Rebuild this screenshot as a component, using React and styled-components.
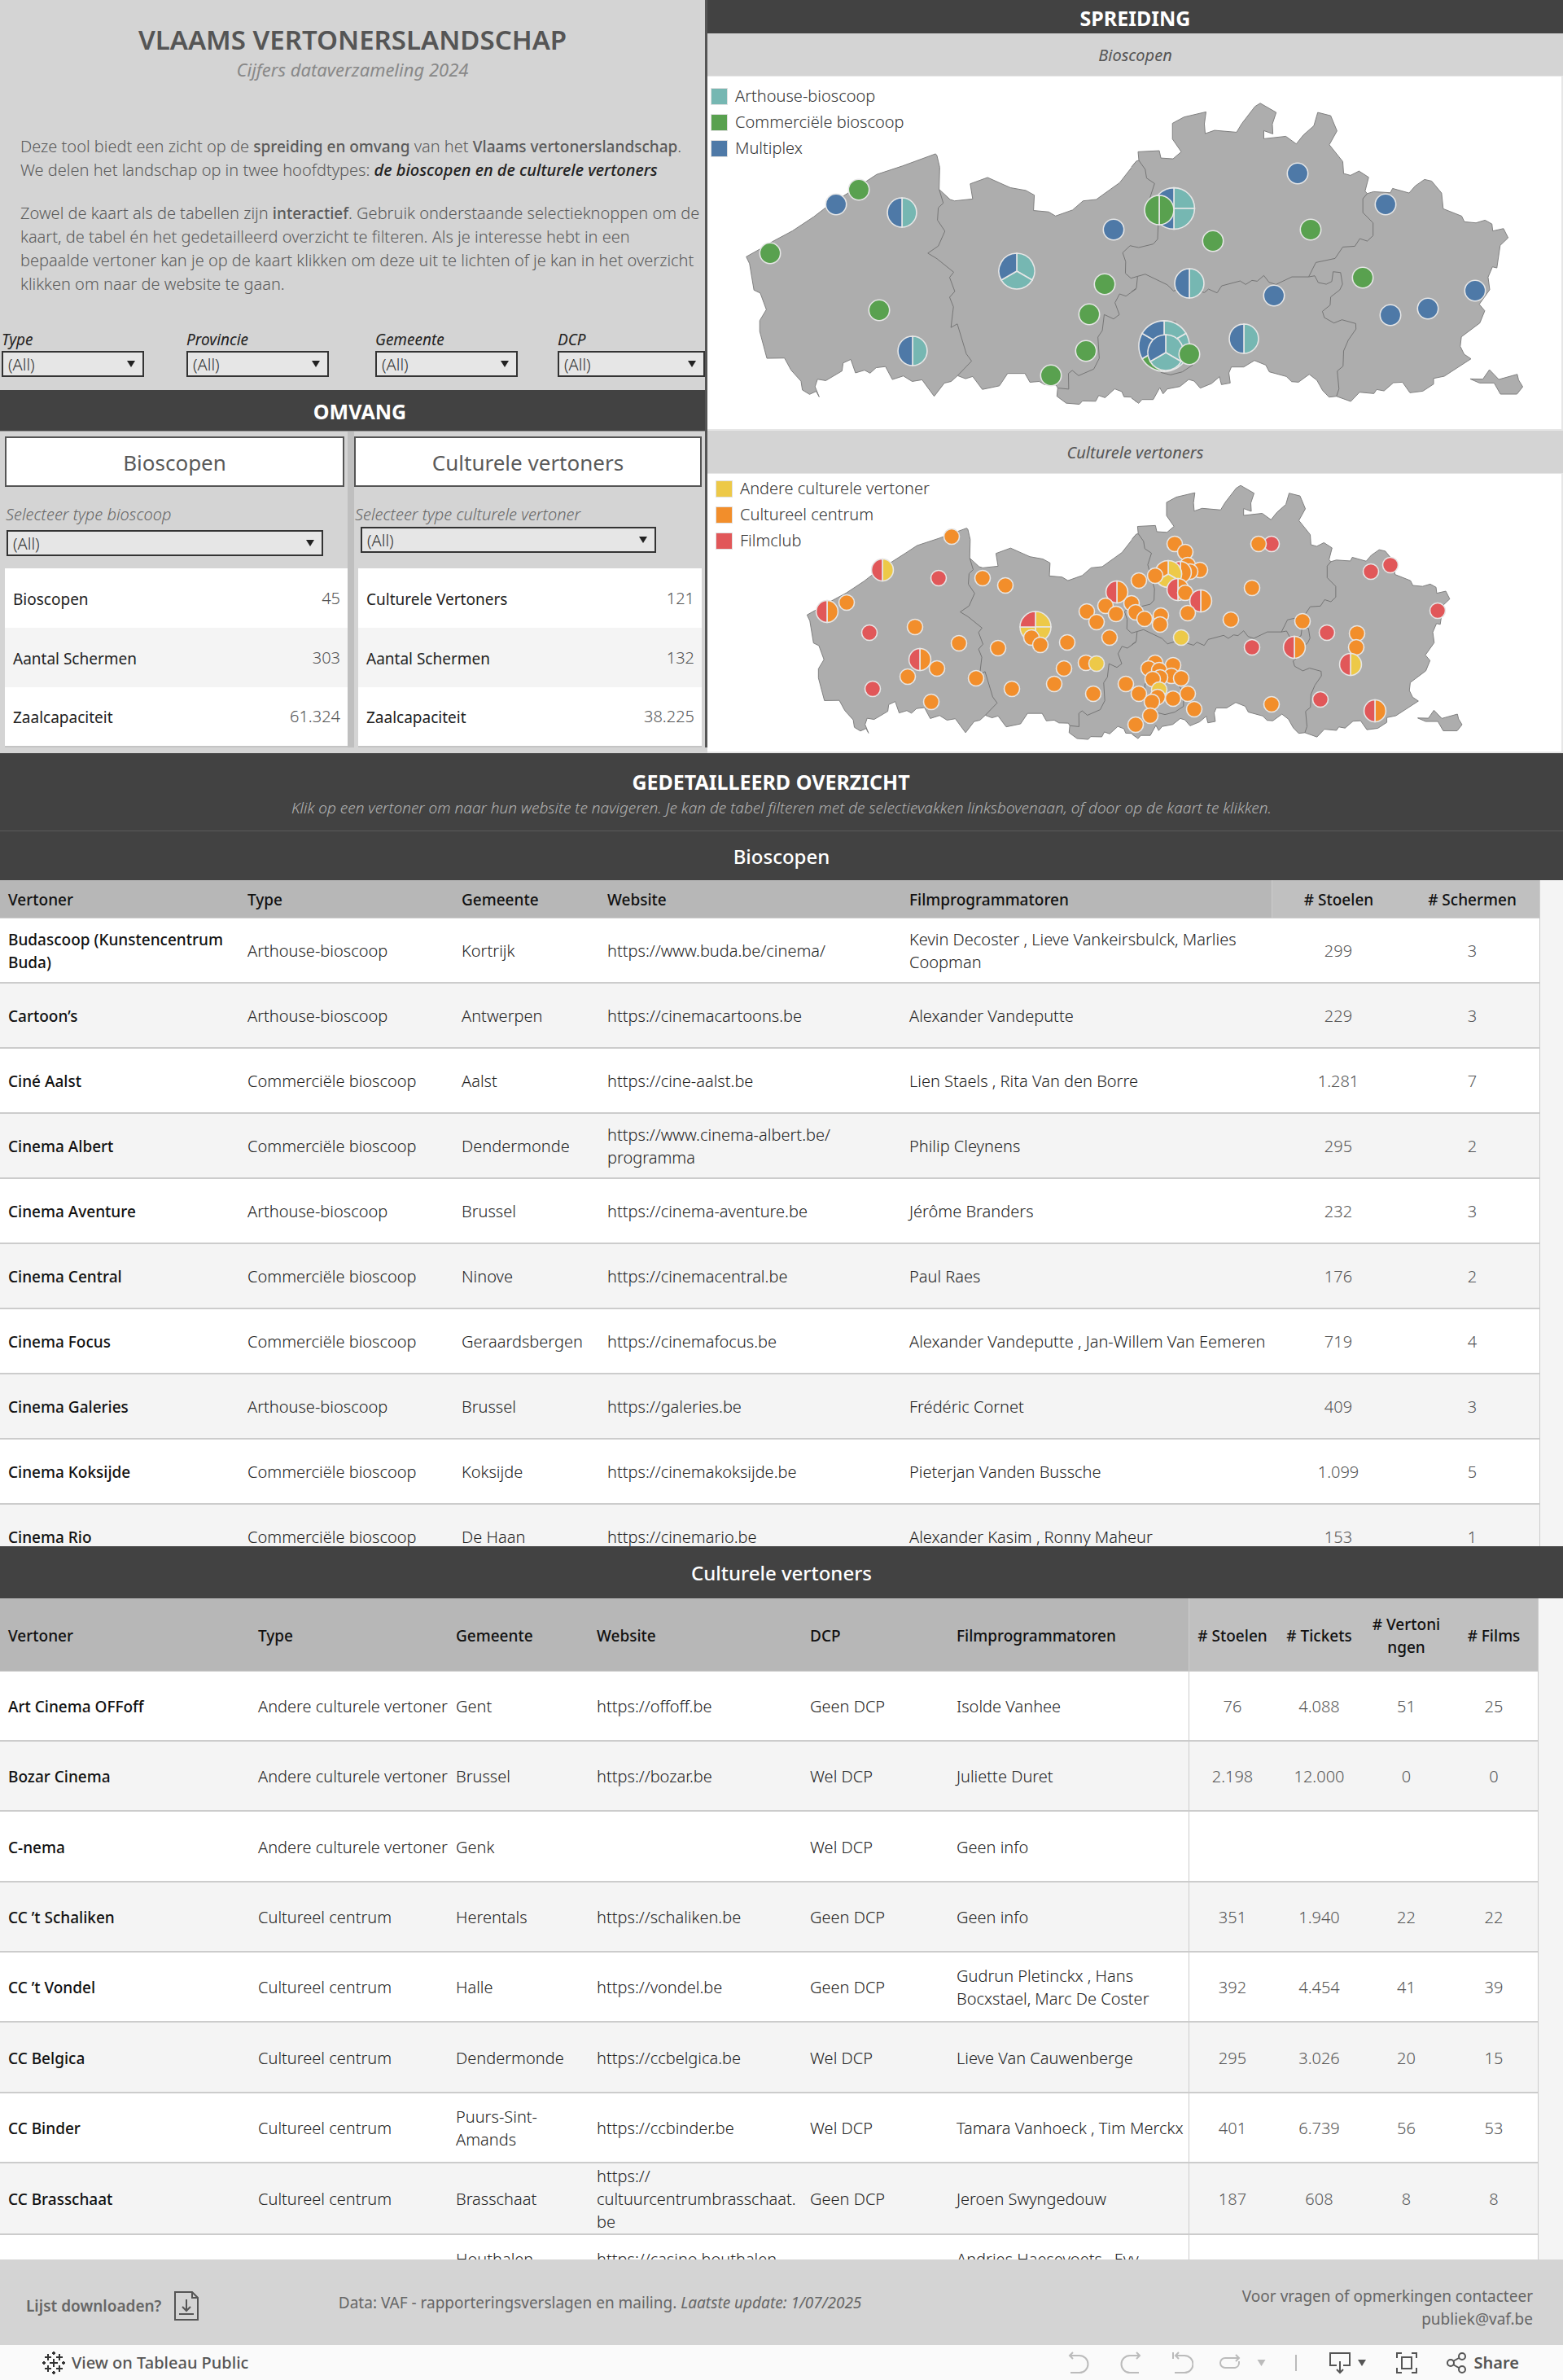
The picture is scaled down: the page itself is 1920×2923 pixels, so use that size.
import React from 'react';
import styled, { createGlobalStyle, css } from 'styled-components';

const GlobalStyle = createGlobalStyle`
  *, *::before, *::after {
    box-sizing: border-box;
  }

  body {
    margin: 0;
    background: #f4f4f4;
    color: #333;
    font-family: 'Noto Sans', 'Open Sans', sans-serif;
    font-size: 20px;
    font-weight: 300;
    line-height: 28px;
  }

  h1, h2, h3, p {
    margin: 0;
  }
`;

const COLORS = {
  teal: '#76b7b2',
  green: '#59a14f',
  blue: '#4e79a7',
  yellow: '#edc948',
  orange: '#f28e2b',
  red: '#e15759',
};

/* ---------- layout ---------- */

const TopArea = styled.div`
  display: grid;
  grid-template-columns: 869fr 1051fr;
  height: 925px;
  background: #d4d4d4;
`;

const LeftPanel = styled.section`
  display: flex;
  flex-direction: column;
  border-right: 3px solid #555;
  margin-bottom: 18px;
  min-width: 0;
`;

const RightPanel = styled.section`
  display: flex;
  flex-direction: column;
  min-width: 0;
`;

const DarkBar = styled.h2`
  display: flex;
  align-items: center;
  justify-content: center;
  flex: none;
  height: ${({ $height }) => $height}px;
  padding: 2px 0 0 ${({ $indent }) => $indent || 0}px;
  background: #424242;
  color: #fff;
  font-size: ${({ $small }) => ($small ? 24 : 25)}px;
  font-weight: ${({ $small }) => ($small ? 500 : 700)};
`;

const SubBar = styled.h3`
  display: flex;
  align-items: center;
  justify-content: center;
  flex: none;
  height: 53px;
  padding-top: 2px;
  border-bottom: 1px solid #e6e6e6;
  background: #d4d4d4;
  color: #555;
  font-size: 20px;
  font-style: italic;
  font-weight: 400;
`;

/* ---------- intro ---------- */

const Intro = styled.header`
  height: 479px;
  padding-top: 29px;
`;

const Title = styled.h1`
  color: #555;
  font-size: 33px;
  font-weight: 600;
  line-height: 40px;
  text-align: center;
`;

const Subtitle = styled.p`
  margin-top: 2px;
  color: #888;
  font-size: 22px;
  font-style: italic;
  font-weight: 400;
  text-align: center;
`;

const IntroText = styled.div`
  margin-top: 66px;
  padding-left: 25px;
  color: #5a5a5a;
  line-height: 29px;
  white-space: nowrap;

  p + p {
    margin-top: 24px;
  }

  b {
    font-size: 19px;
    font-weight: 500;
    line-height: 1;
  }

  em {
    color: #222;
    font-weight: 500;
  }
`;

const Filters = styled.div`
  display: grid;
  grid-template-columns: 227fr 232fr 224fr 181fr;
  margin-top: 40px;
  padding-left: 2px;
`;

const Field = styled.div`
  display: flex;
  flex-direction: column;
  align-items: flex-start;
`;

const FieldLabel = styled.label`
  color: #222;
  font-size: 19px;
  font-style: italic;
  font-weight: 400;
`;

const SelectBox = styled.div`
  position: relative;
  width: ${({ $width }) => $width || '100%'};
`;

const Select = styled.select`
  display: block;
  width: 100%;
  height: 32px;
  padding: 0 6px;
  appearance: none;
  border: 2px solid #333;
  border-radius: 0;
  background: #e6e6e6;
  color: #333;
  font-family: inherit;
  font-size: 20px;
  font-weight: 300;
`;

const SelectCaret = styled.svg`
  position: absolute;
  top: 12px;
  right: 11px;
  width: 10px;
  height: 8px;
  fill: #222;
  pointer-events: none;
`;

const Dropdown = ({ id, width }) => (
  <SelectBox $width={width}>
    <Select id={id} defaultValue="all">
      <option value="all">(All)</option>
    </Select>
    <SelectCaret viewBox="0 0 10 8" aria-hidden="true">
      <path d="M0 0h10L5 8z" />
    </SelectCaret>
  </SelectBox>
);

/* ---------- omvang ---------- */

const Omvang = styled.div`
  display: grid;
  grid-template-columns: 427fr 439fr;
  flex: 1;
  border-top: 1px solid #999;
`;

const OmvangColumn = styled.div`
  display: flex;
  flex-direction: column;
  align-items: flex-start;
  min-width: 0;
  padding-top: 6px;

  ${({ $divided }) =>
    $divided &&
    css`
      border-left: 8px solid #bfbfbf;
    `}
`;

const BoxTitle = styled.h3`
  display: flex;
  align-items: center;
  justify-content: center;
  align-self: stretch;
  height: 62px;
  margin: 0 4px 20px ${({ $left }) => $left}px;
  padding-top: 2px;
  border: 2px solid #555;
  background: #fff;
  color: #5a5a5a;
  font-size: 26px;
  font-weight: 400;
`;

const SelectArea = styled.div`
  height: 80px;
  align-self: stretch;
  padding-left: ${({ $left }) => $left}px;
`;

const SelectHint = styled.label`
  display: block;
  color: #666;
  font-style: italic;
`;

const SelectSlot = styled.div`
  padding: ${({ $pad }) => $pad};
`;

const KpiTable = styled.table`
  align-self: stretch;
  width: auto;
  margin-left: ${({ $left }) => $left}px;
  margin-right: ${({ $right }) => $right}px;
  border-collapse: collapse;
  border-bottom: 2px solid #c4c4c4;
`;

const KpiRow = styled.tr`
  height: 73px;
  background: #fff;

  &:nth-child(2) {
    background: #f4f4f4;
  }
`;

const KpiLabel = styled.th`
  padding: 2px 0 0 10px;
  color: #222;
  font-size: 19px;
  font-weight: 400;
  text-align: left;
`;

const KpiValue = styled.td`
  padding: 0 9px 0 0;
  color: #555;
  text-align: right;
`;

const KpiWrap = styled.div`
  display: grid;
  align-self: stretch;
`;

const Kpis = ({ rows, left, right }) => (
  <KpiWrap>
    <KpiTable $left={left} $right={right}>
      <tbody>
        {rows.map(([label, value]) => (
          <KpiRow key={label}>
            <KpiLabel scope="row">{label}</KpiLabel>
            <KpiValue>{value}</KpiValue>
          </KpiRow>
        ))}
      </tbody>
    </KpiTable>
  </KpiWrap>
);

/* ---------- maps ---------- */

const MapPanel = styled.div`
  position: relative;
  height: ${({ $height }) => $height}px;
  border-right: 2px solid #e6e6e6;
  border-bottom: 2px solid #e6e6e6;
  background: #fff;
`;

const MapSvg = styled.svg`
  display: block;
  width: 100%;
  height: 100%;

  .land {
    fill: #adadad;
    stroke: #808080;
  }

  .border {
    fill: none;
    stroke: #757575;
  }

  .land,
  .border {
    stroke-width: 1px;
    stroke-linejoin: round;
    vector-effect: non-scaling-stroke;
  }

  .pin {
    stroke: #e6e6e6;
    stroke-width: 1.6px;
  }
`;

const Legend = styled.ul`
  position: absolute;
  top: ${({ $top }) => $top}px;
  left: ${({ $left }) => $left}px;
  margin: 0;
  padding: 0;
  list-style: none;
`;

const LegendItem = styled.li`
  display: flex;
  align-items: center;
  gap: 9px;
  height: 32px;

  &::before {
    content: '';
    width: 21px;
    height: 21px;
    border: 1px solid #e0e0e0;
    background: ${({ $color }) => $color};
  }
`;

const WEST =
  'M1568,1457 1548,1440 1523,1439 1515,1420 1489,1410 1454,1442 1431,1434 1420,1455 1372,1454 1361,1466 1313,1462 1279,1437 1282,1407 1276,1396 1235,1395 1215,1383 1181,1386 1163,1354 1100,1354 1070,1399 1008,1412 973,1365 947,1373 918,1362 895,1383 870,1389 833,1437 789,1377 753,1383 721,1363 681,1376 656,1329 622,1333 600,1353 580,1342 547,1352 530,1303 502,1316 498,1345 439,1380 409,1375 400,1402 415,1439 404,1419 380,1430 354,1414 349,1382 313,1342 289,1298 225,1299 199,1201 199,1162 223,1122 201,1062 178,1051 162,955 150,930 200,902 245,875 318,836 395,785 438,752 505,708 580,660 624,631 718,600 838,556 843,562 853,605 851,685 891,722 907,727 973,720 964,665 1027,642 1110,679 1166,689 1197,706 1194,762 1249,767 1274,782 1336,760 1374,727 1422,722 1472,686 1507,661 1568,583';

const WEST_BORDERS = [
  'M851,685 866,735 848,752 845,797 872,837 848,891 810,917 843,937 904,986 889,1005 908,1056 889,1077 903,1112 894,1187 917,1174 950,1283 969,1309 918,1362',
  'M1282,1407 1322,1411 1321,1354 1335,1343 1358,1362 1413,1338 1433,1299 1428,1222 1444,1198 1451,1140 1485,1156 1506,1140 1490,1097 1507,1065 1530,1073 1568,1046',
];

const EAST =
  'M0,372 18,350 27,348 24,316 101,312 107,339 151,342 181,316 149,269 149,211 191,188 271,169 265,213 268,249 302,237 382,244 401,212 449,149 468,137 526,171 512,214 514,250 481,238 481,268 561,259 599,287 625,254 663,220 677,171 724,183 747,239 719,290 768,352 771,396 796,403 827,387 862,410 849,461 857,470 880,463 941,467 949,451 1009,468 1031,442 1065,418 1091,424 1127,468 1133,526 1200,553 1210,574 1252,578 1285,568 1310,582 1313,608 1352,599 1369,633 1340,661 1328,744 1312,740 1296,778 1302,824 1264,878 1284,902 1266,947 1199,998 1195,1033 1209,1062 1234,1079 1137,1143 1098,1151 1098,1172 1059,1198 1012,1204 985,1165 952,1167 918,1197 891,1192 881,1207 829,1202 797,1236 745,1217 718,1220 695,1196 674,1158 646,1136 607,1165 582,1163 563,1144 501,1127 488,1102 447,1085 408,1109 363,1109 354,1131 359,1168 327,1174 320,1145 291,1170 250,1187 228,1161 208,1155 176,1181 130,1190 115,1208 103,1185 79,1229 38,1229 26,1243 0,1223';

const VOEREN =
  'M1231,1153 1277,1154 1301,1119 1335,1155 1402,1136 1407,1157 1422,1182 1401,1209 1341,1209 1318,1168 1265,1168Z';

const EAST_BORDERS = [
  'M27,348 50,381 55,413 84,433 68,483 80,530 97,588 95,638 79,656 26,669 -5,662 -32,688 -21,721 -22,764 -2,782 50,767 130,806 153,829 200,815 265,835 280,822 311,836 328,810 395,792 415,805 438,790 457,793 481,772 500,797 525,805 583,777 644,777',
  'M0,832 18,818 22,777',
  'M857,470 841,489 841,540 878,578 878,625 857,645 830,636 812,664 768,667 740,709 670,724 644,777',
  'M644,777 666,773 679,798 708,804 728,794 733,758 760,761 767,804 757,825 724,851 722,881 694,904 701,927 736,947 765,935 815,949 816,969 788,1010 771,1050 769,1106 748,1124 754,1190 745,1217',
  'M80,950 158,942 209,1022 222,1050 222,1102 185,1127 142,1138 110,1130 65,1100 55,1010Z',
];

const Flanders = ({ transform }) => (
  <g transform={transform}>
    <path className="land" d={WEST} />
    <g transform="translate(1550 237) scale(1 0.986)">
      <path className="land" d={EAST} />
      <path className="land" d={VOEREN} />
      {EAST_BORDERS.map((d) => (
        <path key={d} className="border" d={d} />
      ))}
    </g>
    {WEST_BORDERS.map((d) => (
      <path key={d} className="border" d={d} />
    ))}
  </g>
);

const CODES = {
  T: COLORS.teal,
  G: COLORS.green,
  B: COLORS.blue,
  Y: COLORS.yellow,
  O: COLORS.orange,
  R: COLORS.red,
};

const slicePath = (x, y, r, index, count) => {
  const point = (i) => {
    const angle = (i / count) * Math.PI * 2 - Math.PI / 2;
    return `${x + r * Math.cos(angle)},${y + r * Math.sin(angle)}`;
  };
  return `M${x},${y} L${point(index)} A${r},${r} 0 0 1 ${point(index + 1)}Z`;
};

// one letter per slice, clockwise from the top
const Pin = ({ x, y, kinds, base }) => {
  if (kinds.length === 1) {
    return <circle className="pin" cx={x} cy={y} r={base} fill={CODES[kinds]} />;
  }
  const r = base * Math.sqrt(kinds.length);
  return kinds
    .split('')
    .map((kind, i) => (
      <path
        key={i}
        className="pin"
        d={slicePath(x, y, r, i, kinds.length)}
        fill={CODES[kind]}
      />
    ));
};

const CINEMA_PINS = [
  [158, 157, 'B'], [186, 139, 'G'], [239, 167, 'TB'], [77, 217, 'G'],
  [380, 239, 'TTB'], [211, 287, 'G'], [252, 337, 'TB'], [499, 188, 'B'],
  [488, 255, 'G'], [469, 292, 'G'], [465, 337, 'G'], [422, 367, 'G'],
  [573, 162, 'TTBB'], [555, 164, 'GG'], [725, 119, 'B'], [833, 157, 'B'],
  [621, 202, 'G'], [741, 188, 'G'], [592, 254, 'TB'], [805, 247, 'G'],
  [696, 269, 'B'], [943, 263, 'B'], [885, 285, 'B'], [839, 293, 'B'],
  [659, 322, 'TB'], [561, 331, 'TTTGBB'], [563, 339, 'TTB'], [592, 341, 'G'],
];

const CULTURE_PINS = [
  [300, 77, 'O'], [215, 118, 'YR'], [284, 128, 'R'], [338, 128, 'O'],
  [366, 137, 'O'], [171, 158, 'O'], [147, 169, 'OR'], [199, 195, 'R'],
  [255, 188, 'O'], [309, 208, 'O'], [357, 214, 'O'], [403, 188, 'YYYR'],
  [398, 201, 'O'], [409, 210, 'O'], [442, 207, 'O'], [503, 145, 'OR'],
  [466, 169, 'O'], [489, 162, 'O'], [502, 172, 'O'], [478, 182, 'O'],
  [494, 201, 'O'], [465, 232, 'O'], [478, 233, 'Y'], [438, 239, 'O'],
  [426, 258, 'O'], [474, 270, 'O'], [374, 264, 'O'], [261, 228, 'OR'],
  [282, 239, 'O'], [246, 249, 'O'], [330, 251, 'O'], [275, 280, 'O'],
  [203, 264, 'R'], [514, 258, 'O'], [530, 270, 'O'], [526, 308, 'O'],
  [530, 131, 'O'], [521, 159, 'O'], [526, 170, 'O'], [574, 86, 'O'],
  [587, 96, 'O'], [590, 112, 'O'], [605, 118, 'O'], [593, 120, 'O'],
  [581, 121, 'OR'], [566, 123, 'YYO'], [550, 125, 'O'], [578, 142, 'OR'],
  [587, 146, 'O'], [606, 156, 'OR'], [590, 171, 'O'], [557, 174, 'O'],
  [556, 185, 'O'], [537, 178, 'O'], [582, 201, 'Y'], [643, 179, 'O'],
  [669, 140, 'O'], [693, 86, 'R'], [677, 86, 'O'], [815, 120, 'R'],
  [839, 112, 'R'], [897, 168, 'R'], [731, 181, 'O'], [761, 195, 'R'],
  [798, 196, 'O'], [797, 213, 'O'], [790, 234, 'YR'], [721, 213, 'OR'],
  [669, 213, 'R'], [753, 277, 'R'], [693, 283, 'O'], [820, 291, 'OR'],
  [550, 232, 'O'], [542, 239, 'O'], [572, 235, 'O'], [555, 241, 'O'],
  [570, 248, 'O'], [556, 250, 'O'], [547, 252, 'O'], [582, 251, 'O'],
  [555, 265, 'Y'], [553, 274, 'O'], [572, 276, 'O'], [546, 280, 'O'],
  [590, 270, 'O'], [598, 289, 'O'], [544, 297, 'O'],
];

const PinMap = ({ label, height, transform, pins, base }) => (
  <MapSvg viewBox={`0 0 1049 ${height}`} role="img" aria-label={label}>
    <Flanders transform={transform} />
    {pins.map(([x, y, kinds]) => (
      <Pin key={`${x}-${y}`} x={x} y={y} kinds={kinds} base={base} />
    ))}
  </MapSvg>
);

/* ---------- tables ---------- */

const DetailHeader = styled.div`
  height: 96px;
  padding: 21px 24px 0;
  border-bottom: 1px solid #5a5a5a;
  background: #424242;
  text-align: center;
`;

const DetailTitle = styled.h2`
  padding-right: 26px;
  color: #fff;
  font-size: 25px;
  font-weight: 700;
`;

const DetailText = styled.p`
  margin-top: 4px;
  color: #b4b4b4;
  font-size: 19px;
  font-style: italic;
`;

const TableWindow = styled.div`
  height: ${({ $height }) => $height}px;
  padding-right: ${({ $gutter }) => $gutter}px;
  overflow: hidden;
`;

const DataTable = styled.table`
  width: 100%;
  border-collapse: separate;
  border-right: 1px solid #ccc;
  border-spacing: 0;
  table-layout: fixed;
`;

const HeadCell = styled.th`
  height: ${({ $height }) => $height}px;
  padding: 2px 0 0 ${({ $number }) => ($number ? 0 : 10)}px;
  border-bottom: 1px solid #ccc;
  border-left: ${({ $first }) => ($first ? '1px solid #ccc' : '0')};
  background: ${({ $number }) => ($number ? '#c0c0c0' : '#b7b7b7')};
  color: #111;
  font-size: 19px;
  font-weight: 500;
  text-align: ${({ $number }) => ($number ? 'center' : 'left')};
  white-space: pre-line;
`;

const Row = styled.tr`
  height: ${({ $height }) => $height}px;
  background: #fff;

  &:nth-child(even) {
    background: #f4f4f4;
  }

  &:nth-child(3n) {
    height: ${({ $height, $extra }) => $height + ($extra || 0)}px;
  }
`;

const Cell = styled.td`
  padding: 2px 0 0 ${({ $number }) => ($number ? 0 : 10)}px;
  border-bottom: 2px solid #ccc;
  border-left: ${({ $line }) => ($line ? '1px solid #ccc' : '0')};
  color: ${({ $number }) => ($number ? '#555' : '#222')};
  text-align: ${({ $number }) => ($number ? 'center' : 'left')};
  white-space: pre-line;
`;

const NameCell = styled(Cell).attrs({ as: 'th' })`
  color: #111;
  font-size: 19px;
  font-weight: 500;
`;

const SiteLink = styled.a`
  color: inherit;
  text-decoration: none;
`;

const VenueTable = ({ columns, rows, headHeight, rowHeight, extra, divided }) => {
  const firstNumber = columns.findIndex((column) => column.number);

  return (
    <DataTable>
      <colgroup>
        {columns.map(({ title, width }) => (
          <col key={title} width={width} />
        ))}
      </colgroup>
      <thead>
        <tr>
          {columns.map(({ title, number }, i) => (
            <HeadCell
              key={title}
              scope="col"
              $height={headHeight}
              $number={number}
              $first={i === firstNumber}
            >
              {title}
            </HeadCell>
          ))}
        </tr>
      </thead>
      <tbody>
        {rows.map((row, rowIndex) => (
          <Row key={rowIndex} $height={rowHeight} $extra={extra}>
            {row.map((value, i) => {
              if (i === 0) {
                return (
                  <NameCell key={i} scope="row">
                    {value}
                  </NameCell>
                );
              }
              return (
                <Cell
                  key={i}
                  $number={columns[i].number}
                  $line={divided && i === firstNumber}
                >
                  {columns[i].title === 'Website' && value ? (
                    <SiteLink href={value.replace(/\n/g, '')}>{value}</SiteLink>
                  ) : (
                    value
                  )}
                </Cell>
              );
            })}
          </Row>
        ))}
      </tbody>
    </DataTable>
  );
};

const CINEMA_COLUMNS = [
  { title: 'Vertoner', width: 294 },
  { title: 'Type', width: 263 },
  { title: 'Gemeente', width: 179 },
  { title: 'Website', width: 371 },
  { title: 'Filmprogrammatoren', width: 455 },
  { title: '# Stoelen', width: 164, number: true },
  { title: '# Schermen', width: 165, number: true },
];

const CINEMAS = [
  ['Budascoop (Kunstencentrum\nBuda)', 'Arthouse-bioscoop', 'Kortrijk', 'https://www.buda.be/cinema/', 'Kevin Decoster , Lieve Vankeirsbulck, Marlies\nCoopman', '299', '3'],
  ['Cartoon’s', 'Arthouse-bioscoop', 'Antwerpen', 'https://cinemacartoons.be', 'Alexander Vandeputte', '229', '3'],
  ['Ciné Aalst', 'Commerciële bioscoop', 'Aalst', 'https://cine-aalst.be', 'Lien Staels , Rita Van den Borre', '1.281', '7'],
  ['Cinema Albert', 'Commerciële bioscoop', 'Dendermonde', 'https://www.cinema-albert.be/\nprogramma', 'Philip Cleynens', '295', '2'],
  ['Cinema Aventure', 'Arthouse-bioscoop', 'Brussel', 'https://cinema-aventure.be', 'Jérôme Branders', '232', '3'],
  ['Cinema Central', 'Commerciële bioscoop', 'Ninove', 'https://cinemacentral.be', 'Paul Raes', '176', '2'],
  ['Cinema Focus', 'Commerciële bioscoop', 'Geraardsbergen', 'https://cinemafocus.be', 'Alexander Vandeputte , Jan-Willem Van Eemeren', '719', '4'],
  ['Cinema Galeries', 'Arthouse-bioscoop', 'Brussel', 'https://galeries.be', 'Frédéric Cornet', '409', '3'],
  ['Cinema Koksijde', 'Commerciële bioscoop', 'Koksijde', 'https://cinemakoksijde.be', 'Pieterjan Vanden Bussche', '1.099', '5'],
  ['Cinema Rio', 'Commerciële bioscoop', 'De Haan', 'https://cinemario.be', 'Alexander Kasim , Ronny Maheur', '153', '1'],
];

const CULTURE_COLUMNS = [
  { title: 'Vertoner', width: 307 },
  { title: 'Type', width: 243 },
  { title: 'Gemeente', width: 173 },
  { title: 'Website', width: 262 },
  { title: 'DCP', width: 180 },
  { title: 'Filmprogrammatoren', width: 295 },
  { title: '# Stoelen', width: 107, number: true },
  { title: '# Tickets', width: 107, number: true },
  { title: '# Vertoni\nngen', width: 107, number: true },
  { title: '# Films', width: 108, number: true },
];

const CULTURE = [
  ['Art Cinema OFFoff', 'Andere culturele vertoner', 'Gent', 'https://offoff.be', 'Geen DCP', 'Isolde Vanhee', '76', '4.088', '51', '25'],
  ['Bozar Cinema', 'Andere culturele vertoner', 'Brussel', 'https://bozar.be', 'Wel DCP', 'Juliette Duret', '2.198', '12.000', '0', '0'],
  ['C-nema', 'Andere culturele vertoner', 'Genk', '', 'Wel DCP', 'Geen info', '', '', '', ''],
  ['CC ’t Schaliken', 'Cultureel centrum', 'Herentals', 'https://schaliken.be', 'Geen DCP', 'Geen info', '351', '1.940', '22', '22'],
  ['CC ’t Vondel', 'Cultureel centrum', 'Halle', 'https://vondel.be', 'Geen DCP', 'Gudrun Pletinckx , Hans\nBocxstael, Marc De Coster', '392', '4.454', '41', '39'],
  ['CC Belgica', 'Cultureel centrum', 'Dendermonde', 'https://ccbelgica.be', 'Wel DCP', 'Lieve Van Cauwenberge', '295', '3.026', '20', '15'],
  ['CC Binder', 'Cultureel centrum', 'Puurs-Sint-\nAmands', 'https://ccbinder.be', 'Wel DCP', 'Tamara Vanhoeck , Tim Merckx', '401', '6.739', '56', '53'],
  ['CC Brasschaat', 'Cultureel centrum', 'Brasschaat', 'https://\ncultuurcentrumbrasschaat.\nbe', 'Geen DCP', 'Jeroen Swyngedouw', '187', '608', '8', '8'],
  ['', '', 'Houthalen-\nHelchteren', 'https://casino.houthalen-\nhelchteren.be', '', 'Andries Haesevoets , Evy\nVan Eynde', '', '', '', ''],
];

/* ---------- footer ---------- */

const Footer = styled.footer`
  display: grid;
  grid-template-columns: 424fr 892fr 604fr;
  height: 105px;
  padding-right: 37px;
  background: #d4d4d4;
  color: #666;
  font-size: 19px;
  font-weight: 400;
`;

const Download = styled.div`
  display: flex;
  align-items: center;
  gap: 16px;
  height: 38px;
  margin-top: 38px;
  padding-left: 32px;
  font-weight: 600;
`;

const IconButton = styled.button`
  display: flex;
  align-items: center;
  gap: ${({ $gap }) => $gap || 0}px;
  padding: 0;
  border: 0;
  background: none;
  color: ${({ $muted }) => ($muted ? '#bbb' : '#555')};
  font-family: inherit;
  font-size: 20px;
  font-weight: 600;
  line-height: 28px;
  cursor: pointer;

  svg {
    display: block;
    fill: none;
    stroke: currentColor;
    stroke-width: 2;
  }
`;

const Source = styled.p`
  margin-top: 39px;
`;

const Contact = styled.p`
  margin-top: 31px;
  text-align: right;
`;

const Toolbar = styled.nav`
  display: flex;
  align-items: center;
  justify-content: space-between;
  height: 43px;
  padding: 0 54px 0 52px;
  background: #fafafa;
`;

const TableauLink = styled.a`
  display: flex;
  align-items: center;
  gap: 8px;
  color: #555;
  font-size: 20px;
  font-weight: 500;
  text-decoration: none;
`;

const Tools = styled.div`
  display: flex;
  align-items: center;
  gap: ${({ $gap }) => $gap}px;
`;

const Separator = styled.span`
  width: 2px;
  height: 20px;
  margin-right: 4px;
  background: #bbb;
`;

const DownloadIcon = () => (
  <svg width="30" height="38" viewBox="0 0 30 38">
    <path d="M1 2h21l7 7v27H1zM22 2v7h7M15 11v13M10 20l5 5 5-5M6 29h18" />
  </svg>
);

const PLUSES = [
  [14, 14, 5], [7, 7, 4], [21, 7, 4], [7, 21, 4], [21, 21, 4],
  [14, 2, 2], [14, 26, 2], [2, 14, 2], [26, 14, 2],
];

const TableauIcon = () => (
  <svg width="28" height="28" viewBox="0 0 28 28" fill="none" stroke="#333" strokeWidth="2">
    {PLUSES.map(([x, y, r]) => (
      <path key={`${x}-${y}`} d={`M${x - r} ${y}h${r * 2}M${x} ${y - r}v${r * 2}`} />
    ))}
  </svg>
);

const Caret = ({ size }) => (
  <svg width={size} height="8" viewBox="0 0 10 8">
    <path d="M0 0h10L5 8z" fill="currentColor" stroke="none" />
  </svg>
);

const ToolIcon = ({ children }) => (
  <svg width="26" height="28" viewBox="0 0 26 28">
    {children}
  </svg>
);

const App = () => (
  <>
    <GlobalStyle />
    <main>
      <TopArea>
        <LeftPanel>
          <Intro>
            <Title>VLAAMS VERTONERSLANDSCHAP</Title>
            <Subtitle>Cijfers dataverzameling 2024</Subtitle>
            <IntroText>
              <p>
                Deze tool biedt een zicht op de <b>spreiding en omvang</b> van het{' '}
                <b>Vlaams vertonerslandschap</b>.
                <br />
                We delen het landschap op in twee hoofdtypes:{' '}
                <em>de bioscopen en de culturele vertoners</em>
              </p>
              <p>
                Zowel de kaart als de tabellen zijn <b>interactief</b>. Gebruik
                onderstaande selectieknoppen om de
                <br />
                kaart, de tabel én het gedetailleerd overzicht te filteren. Als je
                interesse hebt in een
                <br />
                bepaalde vertoner kan je op de kaart klikken om deze uit te lichten of
                je kan in het overzicht
                <br />
                klikken om naar de website te gaan.
              </p>
            </IntroText>
            <Filters>
              {['Type', 'Provincie', 'Gemeente', 'DCP'].map((name, i) => (
                <Field key={name}>
                  <FieldLabel htmlFor={`filter-${name}`}>{name}</FieldLabel>
                  <Dropdown id={`filter-${name}`} width={i < 3 ? '175px' : '100%'} />
                </Field>
              ))}
            </Filters>
          </Intro>
          <DarkBar $height={50} $indent={18}>
            OMVANG
          </DarkBar>
          <Omvang>
            <OmvangColumn>
              <BoxTitle $left={6}>Bioscopen</BoxTitle>
              <SelectArea $left={7}>
                <SelectHint htmlFor="type-bioscoop">Selecteer type bioscoop</SelectHint>
                <SelectSlot $pad="5px 30px 0 1px">
                  <Dropdown id="type-bioscoop" />
                </SelectSlot>
              </SelectArea>
              <Kpis
                left={6}
                right={0}
                rows={[
                  ['Bioscopen', '45'],
                  ['Aantal Schermen', '303'],
                  ['Zaalcapaciteit', '61.324'],
                ]}
              />
            </OmvangColumn>
            <OmvangColumn $divided>
              <BoxTitle $left={0}>Culturele vertoners</BoxTitle>
              <SelectArea $left={1}>
                <SelectHint htmlFor="type-cultuur">
                  Selecteer type culturele vertoner
                </SelectHint>
                <SelectSlot $pad="1px 60px 0 7px">
                  <Dropdown id="type-cultuur" />
                </SelectSlot>
              </SelectArea>
              <Kpis
                left={5}
                right={4}
                rows={[
                  ['Culturele Vertoners', '121'],
                  ['Aantal Schermen', '132'],
                  ['Zaalcapaciteit', '38.225'],
                ]}
              />
            </OmvangColumn>
          </Omvang>
        </LeftPanel>

        <RightPanel>
          <DarkBar $height={41}>SPREIDING</DarkBar>
          <SubBar>Bioscopen</SubBar>
          <MapPanel $height={435}>
            <PinMap
              label="Kaart bioscopen"
              height={433}
              transform="translate(-3 -93) scale(0.338)"
              pins={CINEMA_PINS}
              base={12.7}
            />
            <Legend $top={8} $left={4}>
              <LegendItem $color={COLORS.teal}>Arthouse-bioscoop</LegendItem>
              <LegendItem $color={COLORS.green}>Commerciële bioscoop</LegendItem>
              <LegendItem $color={COLORS.blue}>Multiplex</LegendItem>
            </Legend>
          </MapPanel>
          <SubBar>Culturele vertoners</SubBar>
          <MapPanel $height={343}>
            <PinMap
              label="Kaart culturele vertoners"
              height={341}
              transform="translate(79.6 -91.9) scale(0.28512)"
              pins={CULTURE_PINS}
              base={9.5}
            />
            <Legend $top={2} $left={10}>
              <LegendItem $color={COLORS.yellow}>Andere culturele vertoner</LegendItem>
              <LegendItem $color={COLORS.orange}>Cultureel centrum</LegendItem>
              <LegendItem $color={COLORS.red}>Filmclub</LegendItem>
            </Legend>
          </MapPanel>
        </RightPanel>
      </TopArea>

      <DetailHeader>
        <DetailTitle>GEDETAILLEERD OVERZICHT</DetailTitle>
        <DetailText>
          Klik op een vertoner om naar hun website te navigeren. Je kan de tabel
          filteren met de selectievakken linksbovenaan, of door op de kaart te
          klikken.
        </DetailText>
      </DetailHeader>

      <DarkBar $height={60} $small>
        Bioscopen
      </DarkBar>
      <TableWindow $height={818} $gutter={29}>
        <VenueTable
          columns={CINEMA_COLUMNS}
          rows={CINEMAS}
          headHeight={47}
          rowHeight={80}
        />
      </TableWindow>

      <DarkBar $height={64} $small>
        Culturele vertoners
      </DarkBar>
      <TableWindow $height={812} $gutter={30}>
        <VenueTable
          columns={CULTURE_COLUMNS}
          rows={CULTURE}
          headHeight={90}
          rowHeight={86}
          extra={1}
          divided
        />
      </TableWindow>

      <Footer>
        <Download>
          Lijst downloaden?
          <IconButton type="button" aria-label="Download">
            <DownloadIcon />
          </IconButton>
        </Download>
        <Source>
          Data: VAF - rapporteringsverslagen en mailing.{' '}
          <em>Laatste update: 1/07/2025</em>
        </Source>
        <Contact>
          Voor vragen of opmerkingen contacteer
          <br />
          publiek@vaf.be
        </Contact>
      </Footer>

      <Toolbar>
        <TableauLink href="#tableau">
          <TableauIcon />
          View on Tableau Public
        </TableauLink>
        <Tools $gap={36}>
          <Tools $gap={32}>
            <Tools $gap={38}>
              <IconButton type="button" $muted aria-label="Undo">
                <ToolIcon>
                  <path d="M6 1L2 5l4 4M2 5h12a10 10 0 0 1 0 21H3" />
                </ToolIcon>
              </IconButton>
              <IconButton type="button" $muted aria-label="Redo">
                <ToolIcon>
                  <path d="M20 1l4 4-4 4M24 5H12a10 10 0 0 0 0 21h11" />
                </ToolIcon>
              </IconButton>
              <IconButton type="button" $muted aria-label="Revert">
                <ToolIcon>
                  <path d="M1 1v8M8 1L4 5l4 4M4 5h11a10 10 0 0 1 0 21H3" />
                </ToolIcon>
              </IconButton>
            </Tools>
            <IconButton type="button" $muted $gap={20} aria-label="Refresh">
              <ToolIcon>
                <path d="M20 4l4 4-4 4M24 8H7a6 6 0 0 0 0 12h12a6 6 0 0 0 5-6v-2" />
              </ToolIcon>
              <Caret size={11} />
            </IconButton>
          </Tools>
          <Separator />
          <IconButton type="button" $gap={8} aria-label="Download view">
            <ToolIcon>
              <path d="M9 17H1V2h24v15h-8M13 12v13M9 22l4 4 4-4" />
            </ToolIcon>
            <Caret size={12} />
          </IconButton>
          <IconButton type="button" aria-label="Full screen">
            <ToolIcon>
              <path d="M1 8V2h6M19 2h6v6M25 20v6h-6M7 26H1v-6M7 7h12v14H7z" />
            </ToolIcon>
          </IconButton>
          <IconButton type="button" $gap={10}>
            <svg width="24" height="28" viewBox="0 0 24 28">
              <circle cx="5" cy="14" r="4" />
              <circle cx="19" cy="6" r="4" />
              <circle cx="19" cy="22" r="4" />
              <path d="M8 12l7-4M8 16l7 4" />
            </svg>
            Share
          </IconButton>
        </Tools>
      </Toolbar>
    </main>
  </>
);

export default App;
